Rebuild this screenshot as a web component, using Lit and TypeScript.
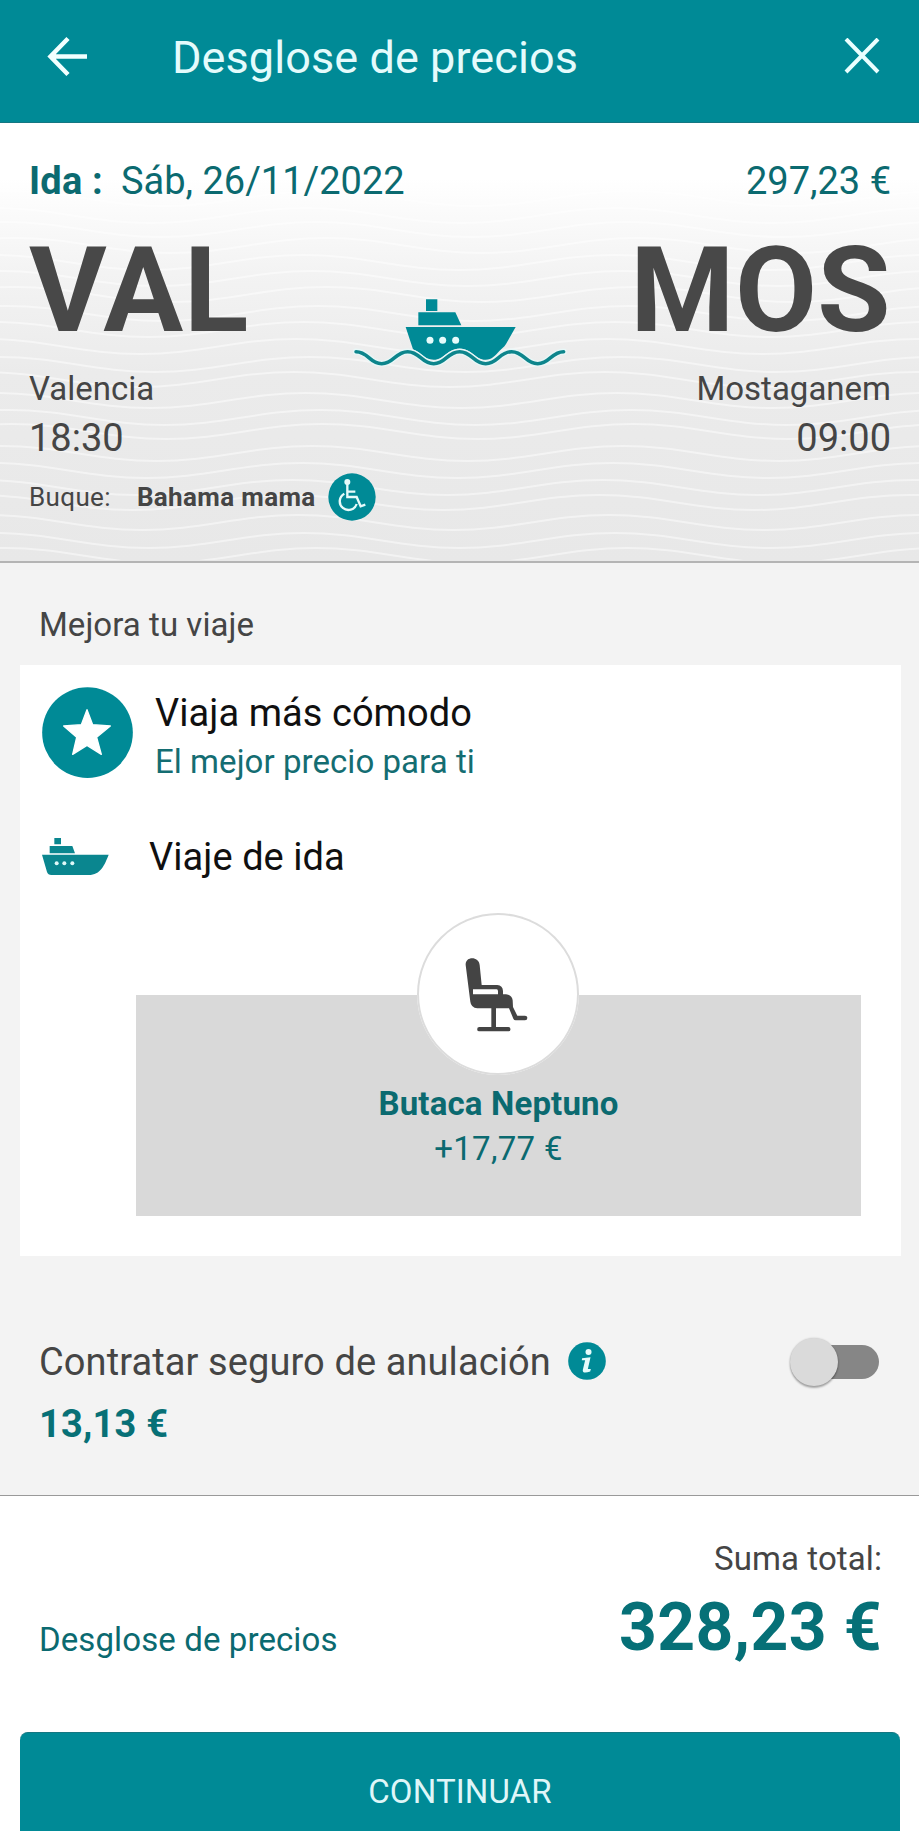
import { LitElement, html, css, svg } from "lit";
import { customElement } from "lit/decorators.js";

/* Crest height, horizontal phase of every swell line in the trip background */
const SWELL: Array<[number, number]> = [
  [68, 24], [85, 10], [99, 20], [115, 30], [132, 8], [148, 16], [164, 30], [183, 22], [199, 8], [216, 0],
  [234, 14], [249, -2], [270, 10], [287, 24], [301, 26], [323, 16], [340, 6], [357, -4], [372, -8], [392, 2], [410, 8], [425, 20],
];

const swellPath = (y: number, shift: number) => {
  const half = 155.5;
  let x = -326 + shift;
  let d = `M${x} ${y}`;
  let low = true;
  while (x < 940) {
    const from = low ? y : y + 15;
    const to = low ? y + 15 : y;
    d += `C${x + 58} ${from} ${x + half - 58} ${to} ${x + half} ${to}`;
    x += half;
    low = !low;
  }
  return d;
};

@customElement("app-root")
export class AppRoot extends LitElement {
  static styles = css`
    :host {
      display: flex;
      flex-direction: column;
      height: 1831px;
      overflow: hidden;
      background: #fff;
      color: #454545;
      font-family: Roboto, "Liberation Sans", sans-serif;
      white-space: nowrap;
    }
    * { box-sizing: border-box; }
    svg { display: block; flex: none; }
    .bar {
      display: flex;
      align-items: center;
      flex: none;
      height: 123px;
      padding: 0 38px 8px 46px;
      background: #008a96;
      border-bottom: 1px solid #147782;
      color: #e4fbfc;
    }
    .title { flex: 1; margin-left: 82px; padding-top: 2px; font-size: 45px; letter-spacing: 0.08px; line-height: 60px; }
    .trip {
      display: grid;
      flex: none;
      height: 440px;
      border-bottom: 2px solid #b4b4b4;
      background: linear-gradient(#fff 0, #fff 55px, #f3f3f3 150px, #ebebeb 250px, #e8e8e8 100%);
    }
    .trip > * { grid-area: 1 / 1; min-width: 0; }
    .info { padding: 38px 28px 0 29px; }
    .row { display: flex; align-items: center; }
    .between { justify-content: space-between; }
    .teal { color: #0b6a70; }
    .date { height: 40px; font-size: 38px; line-height: 40px; }
    .date b { letter-spacing: 0.2px; margin-right: 18px; }
    .route { display: grid; grid-template-columns: 1fr 240px 1fr; margin-top: 30px; }
    .port { display: flex; flex-direction: column; }
    .port.to { align-items: flex-end; }
    .code { font-size: 119px; font-weight: 700; line-height: 120px; letter-spacing: 0.8px; color: #484848; }
    .port.to .code { letter-spacing: 0.4px; }
    .city { margin-top: 18px; font-size: 33px; line-height: 40px; }
    .hour { margin-top: 5px; font-size: 38px; line-height: 48px; }
    .ship { margin-top: 49px; }
    .vessel { height: 48px; margin-top: 11px; font-size: 26px; line-height: 50px; letter-spacing: 0.36px; }
    .vessel svg { margin-top: -1px; }
    .vessel b { margin: 0 12px 0 26px; }
    .extras { flex: none; height: 932px; padding: 42px 18px 0 20px; background: #f3f3f3; }
    .heading { padding-left: 19px; font-size: 33px; line-height: 40px; letter-spacing: 0.05px; }
    .card { height: 591px; margin-top: 20px; padding: 22px 40px 0 22px; background: #fff; color: #101010; }
    .promo { display: flex; gap: 22px; height: 98px; }
    .promo-text { padding-top: 2px; }
    .big { font-size: 38px; line-height: 48px; letter-spacing: 0.06px; }
    .sub { font-size: 33px; line-height: 49px; letter-spacing: 0.05px; color: #146d72; }
    .leg { display: flex; align-items: center; gap: 39px; height: 48px; margin-top: 48px; }
    .leg svg { margin-top: -3px; }
    .seat {
      position: relative;
      height: 221px;
      margin: 114px 0 0 94px;
      padding-top: 89px;
      background: #d9d9d9;
      text-align: center;
      font-size: 33px;
    }
    .seat-icon {
      position: absolute;
      top: -82px;
      left: 281px;
      width: 162px;
      height: 162px;
      border-radius: 50%;
      background: #fff;
      box-shadow: inset 0 0 0 2px #dcdcdc;
    }
    .seat-name { font-weight: 700; line-height: 40px; letter-spacing: 0.15px; }
    .seat-price { margin-top: 3px; line-height: 44px; letter-spacing: 0.3px; }
    .insurance { height: 50px; margin-top: 81px; padding: 0 22px 0 19px; font-size: 38px; line-height: 50px; letter-spacing: 0.1px; }
    .insurance svg { margin: -3px 0 0 17px; }
    .switch { display: flex; align-items: center; width: 78px; height: 34px; border-radius: 17px; background: #868686; }
    .thumb {
      width: 48px;
      height: 48px;
      margin-left: -11px;
      border-radius: 50%;
      background: #dadada;
      box-shadow: 0 2px 2px rgba(0, 0, 0, 0.3), 0 0 2px rgba(0, 0, 0, 0.2);
    }
    .fee { margin-top: 17px; padding-left: 19px; font-size: 38px; font-weight: 700; line-height: 40px; letter-spacing: 0.2px; color: #077076; }
    .summary {
      display: flex;
      flex: none;
      justify-content: space-between;
      align-items: flex-end;
      height: 173px;
      padding: 0 37px 0 39px;
      border-top: 1px solid #999;
    }
    .link { font-size: 33px; line-height: 57px; letter-spacing: 0.1px; }
    .total { display: flex; flex-direction: column; align-items: flex-end; }
    .total-label { font-size: 33px; line-height: 40px; letter-spacing: 0.1px; }
    .total-value { margin-top: 9px; font-size: 66px; font-weight: 700; line-height: 80px; letter-spacing: 0.4px; color: #067077; }
    .go {
      flex: none;
      height: 99px;
      margin: 64px 19px 0 20px;
      padding-top: 39px;
      border-radius: 8px 8px 0 0;
      border-top: 1px solid #147782;
      background: #008a96;
      color: #dff6f8;
      text-align: center;
      font-size: 33px;
      line-height: 40px;
      letter-spacing: 0.12px;
    }
  `;

  render() {
    return html`
      <div class="bar">
        <svg width="44" height="44" viewBox="0 0 44 44" fill="none" stroke="#f2ffff" stroke-width="4.500">
          <path d="M41 21.500H5M22 3.500L4.500 21.500L22 39.500" />
        </svg>
        <div class="title">Desglose de precios</div>
        <svg width="38" height="38" viewBox="0 0 38 38" fill="none" stroke="#eaffff" stroke-width="4">
          <path d="M3 1L35 34M35 1L3 34" />
        </svg>
      </div>

      <div class="trip">
        <svg width="919" height="437" viewBox="0 0 919 437" fill="none" stroke="#fff" stroke-opacity=".48" stroke-width="2">
          ${SWELL.map(([y, s]) => svg`<path d=${swellPath(y, s)} />`)}
        </svg>
        <div class="info">
          <div class="row between date teal">
            <div><b>Ida :</b>Sáb, 26/11/2022</div>
            <div>297,23 €</div>
          </div>
          <div class="route">
            <div class="port">
              <div class="code">VAL</div>
              <div class="city">Valencia</div>
              <div class="hour">18:30</div>
            </div>
            <svg class="ship" width="240" height="100" viewBox="0 0 720 300">
              <g fill="#008a96">
                <path d="M258 58H292V93H258ZM235 97H346L364 136H235ZM197 141H527L498 192C492 202 485 206 479 212C465 226 456 239 437 239C405 239 396 206 359 206C322 206 313 239 281 239C252 239 245 218 219 208Z" />
              </g>
              <g fill="#e6fbfb"><circle cx="270" cy="181" r="10.5" /><circle cx="308" cy="181" r="10.5" /><circle cx="347" cy="181" r="10.5" /></g>
              <path d="M48 215C85 215 88 251 125 251S166 215 203 215S244 251 281 251S322 215 359 215S400 251 437 251S478 215 515 215S556 251 593 251S634 215 671 215"
                fill="none" stroke="#e8f7f7" stroke-width="19" stroke-linecap="round" />
              <path d="M48 215C85 215 88 251 125 251S166 215 203 215S244 251 281 251S322 215 359 215S400 251 437 251S478 215 515 215S556 251 593 251S634 215 671 215"
                fill="none" stroke="#0d858c" stroke-width="10.5" stroke-linecap="round" />
            </svg>
            <div class="port to">
              <div class="code">MOS</div>
              <div class="city">Mostaganem</div>
              <div class="hour">09:00</div>
            </div>
          </div>
          <div class="row vessel">
            Buque:<b>Bahama mama</b>
            <svg width="48" height="48" viewBox="26 24 144 144">
              <circle cx="98" cy="96" r="71" fill="#008a96" />
              <circle cx="84" cy="51" r="9" fill="#e6fbfb" />
              <path d="M84 56V96H112L124 124L138 119M85 80H108M75 86A26 26 0 1 0 112 117" fill="none" stroke="#e6fbfb" stroke-width="7" />
            </svg>
          </div>
        </div>
      </div>

      <div class="extras">
        <div class="heading">Mejora tu viaje</div>
        <div class="card">
          <div class="promo">
            <svg width="91" height="92" viewBox="36 36 273 276">
              <circle cx="172.500" cy="173" r="136" fill="#008a96" />
              <path d="M171 104L188 149L241 153L200 187L214 238L171 211L128 238L140 187L101 153L154 149Z" fill="#fff" stroke="#fff" stroke-width="4" stroke-linejoin="round" />
            </svg>
            <div class="promo-text">
              <div class="big">Viaja más cómodo</div>
              <div class="sub">El mejor precio para ti</div>
            </div>
          </div>
          <div class="leg">
            <svg width="68" height="40" viewBox="36 480 204 120">
              <path d="M73 486H93V505H73ZM59 510H127L135 532H59ZM36 536H236C224 566 212 597 176 597H64Q54 597 51 588Z" fill="#0a868f" />
              <g fill="#dff8f8"><circle cx="80" cy="562" r="6" /><circle cx="103" cy="562" r="6" /><circle cx="127" cy="562" r="6" /></g>
            </svg>
            <div class="big">Viaje de ida</div>
          </div>
          <div class="seat teal">
            <div class="seat-icon">
              <svg width="162" height="162" viewBox="51 38 486 486">
                <path fill="#444" fill-rule="evenodd" d="M197 194C195 167 237 167 239 194L245 254H292Q308 256 309 272V282H318Q336 284 338 300L339 320L352 346H375A7 7 0 0 1 375 360H347Q342 360 340 355L327 324H288V380H325A6.500 6.500 0 0 1 325 393H238A6.500 6.500 0 0 1 238 380H274V324H232Q213 322 211 304ZM219 267H290Q294 267 294 273V282H219Z" />
              </svg>
            </div>
            <div class="seat-name">Butaca Neptuno</div>
            <div class="seat-price">+17,77 €</div>
          </div>
        </div>
        <div class="row between insurance">
          <div class="row">
            Contratar seguro de anulación
            <svg width="38" height="38" viewBox="24 63 113 113">
              <circle cx="80.500" cy="119.500" r="56" fill="#008a96" />
              <circle cx="85" cy="93" r="9" fill="#e6fbfb" />
              <path d="M66 111L91 108L83 143L92 143L90 151Q66 158 68 146L75 117L65 117Z" fill="#e6fbfb" />
            </svg>
          </div>
          <div class="switch"><div class="thumb"></div></div>
        </div>
        <div class="fee">13,13 €</div>
      </div>

      <div class="summary">
        <div class="link teal">Desglose de precios</div>
        <div class="total">
          <div class="total-label">Suma total:</div>
          <div class="total-value">328,23 €</div>
        </div>
      </div>
      <div class="go">CONTINUAR</div>
    `;
  }
}
